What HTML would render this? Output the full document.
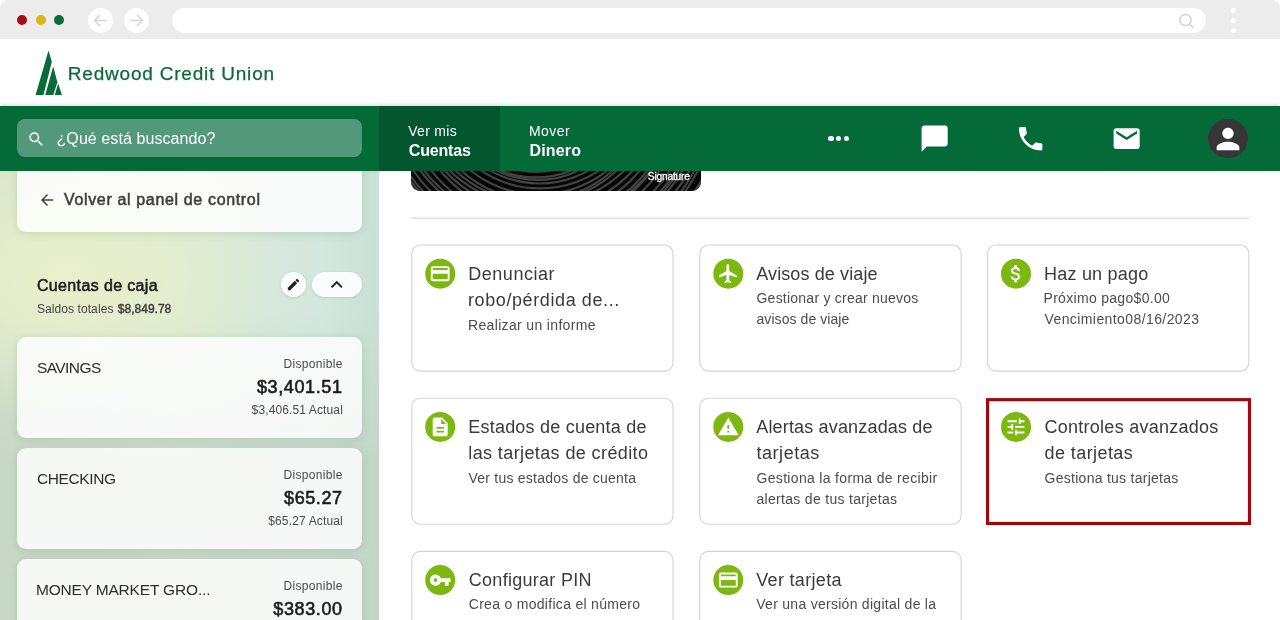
<!DOCTYPE html>
<html lang="es">
<head>
<meta charset="utf-8">
<title>Redwood Credit Union</title>
<style>
*{box-sizing:border-box;margin:0;padding:0}
html,body{width:1280px;height:620px;overflow:hidden;background:#fff}
body{position:relative;font-family:"Liberation Sans",sans-serif;color:#333}
.abs{position:absolute}
#txt{position:absolute;left:0;top:0;width:1280px;height:620px;z-index:10;will-change:transform}
.t{position:absolute;white-space:nowrap;line-height:1}
#chrome{left:0;top:0;width:1280px;height:39px;background:#ececec;border-radius:8px 8px 0 0}
.dot{position:absolute;width:10px;height:10px;border-radius:50%;top:15px}
.navb{position:absolute;width:25px;height:25px;border-radius:50%;background:#fff;top:8px}
#url{left:172px;top:8px;width:1034px;height:25px;border-radius:13px;background:#fff}
#hdr{left:0;top:39px;width:1280px;height:66px;background:#fff}
#nav{z-index:5;left:0;top:105.5px;width:1280px;height:65px;background:#046a38;box-shadow:0 -1px 4px rgba(0,0,0,.16)}
#tab{left:379px;top:0;width:121px;height:65px;background:#03562d}
#search{left:17px;top:13px;width:345px;height:38.500px;border-radius:8px;background:#52987a}
#side{left:0;top:170px;width:379px;height:450px;overflow:hidden;
 background:
 radial-gradient(ellipse 215px 145px at 65px 105px, rgba(234,240,202,1), rgba(234,240,202,0) 100%),
 linear-gradient(180deg, rgba(190,208,192,0) 140px, rgba(190,208,192,.62) 290px),
 linear-gradient(90deg,#d7e4cd 0%,#dcebd5 45%,#d2e7de 85%,#c9e0d5 100%);
}
.scard{position:absolute;left:17px;width:345px;border-radius:9px;background:rgba(255,255,255,.82);box-shadow:0 2px 8px rgba(60,90,70,.14)}
</style>
</head>
<body>
<div id="chrome" class="abs">
  <div class="dot" style="left:17px;background:#a80d14"></div>
  <div class="dot" style="left:35.500px;background:#e2b414"></div>
  <div class="dot" style="left:54px;background:#0c6b3a"></div>
  <div class="navb" style="left:88px"><svg width="25" height="25" viewBox="0 0 25 25"><path d="M19 12.500H6.500M12 7l-5.500 5.500L12 18" fill="none" stroke="#d8d8d8" stroke-width="1.600"/></svg></div>
  <div class="navb" style="left:124px"><svg width="25" height="25" viewBox="0 0 25 25"><path d="M6 12.500h12.500M13 7l5.500 5.500L13 18" fill="none" stroke="#d8d8d8" stroke-width="1.600"/></svg></div>
  <div id="url" class="abs"><svg class="abs" style="left:1003.800px;top:3px" width="20" height="20" viewBox="0 0 20 20"><circle cx="9.500" cy="9" r="5.600" fill="none" stroke="#d2d2d2" stroke-width="1.500"/><path d="M13.500 13l4 4" stroke="#d2d2d2" stroke-width="1.600"/></svg></div>
  <div class="abs" style="left:1231px;top:8px;width:5px;height:5px;border-radius:50%;background:#fff"></div>
  <div class="abs" style="left:1231px;top:18px;width:5px;height:5px;border-radius:50%;background:#fff"></div>
  <div class="abs" style="left:1231px;top:28px;width:5px;height:5px;border-radius:50%;background:#fff"></div>
</div>
<div id="hdr" class="abs">
  <svg class="abs" style="left:30px;top:8px" width="40" height="52" viewBox="30 47 40 52">
    <g fill="#0b6a39">
      <path d="M48.500 50.600 L51.800 61.800 L43.500 95 L35.600 95 Z"/>
      <path d="M53.200 66.500 L57.400 82.200 L53.300 95 L45.200 95 Z"/>
      <path d="M58.200 83.600 L61.900 95 L54.700 95 Z"/>
    </g>
  </svg>
</div>
<div id="nav" class="abs">
  <div id="tab" class="abs"></div>
  <div id="search" class="abs">
    <svg class="abs" style="left:10.200px;top:11.200px" width="18.500" height="18.500" viewBox="0 0 24 24"><path fill="#fff" d="M15.500 14h-.790l-.280-.270A6.471 6.471 0 0 0 16 9.500 6.500 6.500 0 1 0 9.500 16c1.610 0 3.090-.590 4.230-1.570l.270.280v.790l5 4.990L20.490 19l-4.990-5zm-6 0C7.010 14 5 11.990 5 9.500S7.010 5 9.500 5 14 7.010 14 9.500 11.990 14 9.500 14z"/></svg>
  </div>
  <div class="abs" style="left:828.4px;top:30.400px;width:5.200px;height:5.200px;border-radius:50%;background:#fff"></div>
  <div class="abs" style="left:836.3px;top:30.400px;width:5.200px;height:5.200px;border-radius:50%;background:#fff"></div>
  <div class="abs" style="left:844.2px;top:30.400px;width:5.200px;height:5.200px;border-radius:50%;background:#fff"></div>
  <svg class="abs" style="left:919.3px;top:17.200px" width="31.3" height="31.3" viewBox="0 0 24 24"><path fill="#fff" d="M20 2H4c-1.100 0-2 .900-2 2v18l4-4h14c1.100 0 2-.900 2-2V4c0-1.100-.900-2-2-2z"/></svg>
  <svg class="abs" style="left:1015.4px;top:17.600px" width="31.3" height="31.3" viewBox="0 0 24 24"><path fill="#fff" d="M6.620 10.790c1.440 2.830 3.760 5.140 6.590 6.590l2.200-2.200c.270-.270.670-.360 1.020-.240 1.120.370 2.330.570 3.570.570.550 0 1 .450 1 1V20c0 .550-.450 1-1 1-9.390 0-17-7.610-17-17 0-.550.450-1 1-1h3.500c.550 0 1 .450 1 1 0 1.250.200 2.450.570 3.570.110.350.030.740-.250 1.020l-2.200 2.200z"/></svg>
  <svg class="abs" style="left:1111.45px;top:17.900px" width="31.3" height="31.3" viewBox="0 0 24 24"><path fill="#fff" d="M20 4H4c-1.100 0-1.990.900-1.990 2L2 18c0 1.100.900 2 2 2h16c1.100 0 2-.900 2-2V6c0-1.100-.900-2-2-2zm0 4l-8 5-8-5V6l8 5 8-5v2z"/></svg>
  <div class="abs" style="left:1208.4px;top:13.200px;width:39.600px;height:39.600px;border-radius:50%;background:#363636"></div>
  <svg class="abs" style="left:1211.2px;top:16.400px" width="34" height="34" viewBox="0 0 24 24"><path fill="#fff" d="M12 12c2.210 0 4-1.790 4-4s-1.790-4-4-4-4 1.790-4 4 1.790 4 4 4zm0 2c-2.670 0-8 1.340-8 4v2h16v-2c0-2.660-5.330-4-8-4z"/></svg>
</div>
<div id="side" class="abs">
  <div class="scard" style="top:-10px;height:71.500px">
    <svg class="abs" style="left:21px;top:31px" width="18" height="18" viewBox="0 0 24 24"><path fill="#444" d="M20 11H7.830l5.590-5.590L12 4l-8 8 8 8 1.410-1.410L7.830 13H20v-2z"/></svg>
  </div>
  <div class="abs" style="left:281px;top:102px;width:25px;height:25px;border-radius:50%;background:rgba(255,255,255,.9);box-shadow:0 1px 3px rgba(60,90,70,.15)">
    <svg class="abs" style="left:5px;top:5px" width="15" height="15" viewBox="0 0 24 24"><path fill="#222" d="M3 17.250V21h3.750L17.810 9.940l-3.750-3.750L3 17.250zM20.710 7.040a.996.996 0 0 0 0-1.410l-2.340-2.340a.996.996 0 0 0-1.410 0l-1.830 1.830 3.750 3.750 1.830-1.830z"/></svg>
  </div>
  <div class="abs" style="left:312px;top:102px;width:49.800px;height:25px;border-radius:13px;background:rgba(255,255,255,.9);box-shadow:0 1px 3px rgba(60,90,70,.15)">
    <svg class="abs" style="left:13.200px;top:0.800px" width="23.500" height="23.500" viewBox="0 0 24 24"><path fill="#222" d="M7.410 15.410L12 10.830l4.590 4.580L18 14l-6-6-6 6z"/></svg>
  </div>
  <div class="scard" style="top:167px;height:101px"></div>
  <div class="scard" style="top:278px;height:101px"></div>
  <div class="scard" style="top:389px;height:101px"></div>
</div>
<div id="main" class="abs" style="left:0;top:0">
<div class="abs" id="bcard" style="left:411px;top:150px;width:290px;height:41px;border-radius:9px;background:#060606;overflow:hidden">
<svg class="abs" style="left:0;top:0" width="290" height="41" viewBox="0 0 290 41"><g fill="none" stroke="#444" stroke-width="2.100"><ellipse cx="127.0" cy="-53.5" rx="61.5" ry="58.0"/><ellipse cx="128.7" cy="-54.6" rx="67.0" ry="62.5"/><ellipse cx="128.8" cy="-56.3" rx="71.4" ry="67.5"/><ellipse cx="127.3" cy="-56.1" rx="74.8" ry="71.3"/><ellipse cx="125.5" cy="-54.3" rx="81.3" ry="76.2"/><ellipse cx="125.1" cy="-53.5" rx="86.6" ry="80.9"/><ellipse cx="126.4" cy="-54.9" rx="89.1" ry="84.8"/><ellipse cx="128.3" cy="-56.4" rx="94.6" ry="89.9"/><ellipse cx="129.0" cy="-55.8" rx="100.8" ry="94.2"/><ellipse cx="127.8" cy="-54.0" rx="104.8" ry="98.4"/><ellipse cx="125.9" cy="-53.6" rx="108.5" ry="103.5"/><ellipse cx="125.0" cy="-55.2" rx="113.7" ry="107.4"/><ellipse cx="125.9" cy="-56.5" rx="120.2" ry="112.1"/><ellipse cx="127.8" cy="-55.6" rx="123.9" ry="117.0"/><ellipse cx="129.0" cy="-53.8" rx="126.6" ry="120.8"/><ellipse cx="128.3" cy="-53.8" rx="133.9" ry="125.8"/><ellipse cx="126.4" cy="-55.6" rx="139.6" ry="130.3"/><ellipse cx="125.1" cy="-56.5" rx="141.3" ry="134.3"/><ellipse cx="125.5" cy="-55.2" rx="146.6" ry="139.5"/><ellipse cx="127.3" cy="-53.6" rx="153.6" ry="143.6"/><ellipse cx="128.8" cy="-54.0" rx="157.8" ry="147.9"/><ellipse cx="128.7" cy="-55.8" rx="160.5" ry="153.0"/><ellipse cx="127.0" cy="-56.4" rx="165.7" ry="156.9"/><ellipse cx="125.3" cy="-54.9" rx="173.3" ry="161.6"/><ellipse cx="125.2" cy="-53.5" rx="176.5" ry="166.5"/><ellipse cx="126.7" cy="-54.3" rx="178.3" ry="170.3"/><ellipse cx="128.5" cy="-56.1" rx="186.4" ry="175.4"/><ellipse cx="128.9" cy="-56.3" rx="192.7" ry="179.8"/><ellipse cx="127.5" cy="-54.6" rx="193.8" ry="183.8"/><ellipse cx="125.7" cy="-53.5" rx="198.4" ry="189.0"/></g></svg>
</div>
<svg class="abs" style="left:0;top:0" width="1280" height="620" viewBox="0 0 1280 620">
<rect x="411.80" y="245.00" width="261.2" height="126.1" rx="8.5" fill="#fff" stroke="#d3d3d3" stroke-width="1.1"/>
<circle cx="440.20" cy="273.70" r="15" fill="#7cb80f"/><svg x="428.95" y="262.45" width="22.5" height="22.5" viewBox="0 0 24 24"><path fill="#fff" d="M20 4H4c-1.110 0-1.990.890-1.990 2L2 18c0 1.110.890 2 2 2h16c1.110 0 2-.890 2-2V6c0-1.110-.890-2-2-2zm0 14H4v-6h16v6zm0-10H4V6h16v2z"/></svg>
<rect x="699.90" y="245.00" width="261.2" height="126.1" rx="8.5" fill="#fff" stroke="#d3d3d3" stroke-width="1.1"/>
<circle cx="728.30" cy="273.70" r="15" fill="#7cb80f"/><svg x="717.05" y="262.45" width="22.5" height="22.5" viewBox="0 0 24 24"><path fill="#fff" d="M21 16v-2l-8-5V3.500c0-.830-.670-1.500-1.500-1.500S10 2.670 10 3.500V9l-8 5v2l8-2.500V19l-2 1.500V22l3.500-1 3.500 1v-1.500L13 19v-5.500l8 2.500z"/></svg>
<rect x="987.60" y="245.00" width="261.2" height="126.1" rx="8.5" fill="#fff" stroke="#d3d3d3" stroke-width="1.1"/>
<circle cx="1016.00" cy="273.70" r="15" fill="#7cb80f"/><svg x="1004.75" y="262.45" width="22.5" height="22.5" viewBox="0 0 24 24"><path fill="#fff" d="M11.800 10.900c-2.270-.590-3-1.200-3-2.150 0-1.090 1.010-1.850 2.700-1.850 1.780 0 2.440.850 2.500 2.100h2.210c-.070-1.720-1.120-3.300-3.210-3.810V3h-3v2.160c-1.940.420-3.500 1.680-3.500 3.610 0 2.310 1.910 3.460 4.700 4.130 2.500.600 3 1.480 3 2.410 0 .690-.490 1.790-2.700 1.790-2.060 0-2.870-.920-2.980-2.100h-2.200c.120 2.190 1.760 3.420 3.680 3.830V21h3v-2.150c1.950-.370 3.500-1.500 3.500-3.550 0-2.840-2.430-3.810-4.700-4.400z"/></svg>
<rect x="411.80" y="398.20" width="261.2" height="126.1" rx="8.5" fill="#fff" stroke="#d3d3d3" stroke-width="1.1"/>
<circle cx="440.20" cy="426.90" r="15" fill="#7cb80f"/><svg x="428.95" y="415.65" width="22.5" height="22.5" viewBox="0 0 24 24"><path fill="#fff" d="M14 2H6c-1.100 0-1.990.900-1.990 2L4 20c0 1.100.890 2 1.990 2H18c1.100 0 2-.900 2-2V8l-6-6zm2 16H8v-2h8v2zm0-4H8v-2h8v2zm-3-5V3.500L18.500 9H13z"/></svg>
<rect x="699.90" y="398.20" width="261.2" height="126.1" rx="8.5" fill="#fff" stroke="#d3d3d3" stroke-width="1.1"/>
<circle cx="728.30" cy="426.90" r="15" fill="#7cb80f"/><svg x="717.05" y="415.65" width="22.5" height="22.5" viewBox="0 0 24 24"><path fill="#fff" d="M1 21h22L12 2 1 21zm12-3h-2v-2h2v2zm0-4h-2v-4h2v4z"/></svg>
<circle cx="1016.00" cy="426.90" r="15" fill="#7cb80f"/><svg x="1004.75" y="415.65" width="22.5" height="22.5" viewBox="0 0 24 24"><path fill="#fff" d="M3 17v2h6v-2H3zM3 5v2h10V5H3zm10 16v-2h8v-2h-8v-2h-2v6h2zM7 9v2H3v2h4v2h2V9H7zm14 4v-2H11v2h10zm-6-4h2V7h4V5h-4V3h-2v6z"/></svg>
<rect x="411.80" y="551.40" width="261.2" height="126.1" rx="8.5" fill="#fff" stroke="#d3d3d3" stroke-width="1.1"/>
<circle cx="440.20" cy="580.10" r="15" fill="#7cb80f"/><svg x="428.95" y="568.85" width="22.5" height="22.5" viewBox="0 0 24 24"><path fill="#fff" d="M12.650 10C11.830 7.670 9.610 6 7 6c-3.310 0-6 2.690-6 6s2.690 6 6 6c2.610 0 4.830-1.670 5.650-4H17v4h4v-4h2v-4H12.650zM7 14c-1.100 0-2-.900-2-2s.900-2 2-2 2 .900 2 2-.900 2-2 2z"/></svg>
<rect x="699.90" y="551.40" width="261.2" height="126.1" rx="8.5" fill="#fff" stroke="#d3d3d3" stroke-width="1.1"/>
<circle cx="728.30" cy="580.10" r="15" fill="#7cb80f"/><svg x="717.05" y="568.85" width="22.5" height="22.5" viewBox="0 0 24 24"><path fill="#fff" d="M20 4H4c-1.110 0-1.990.890-1.990 2L2 18c0 1.110.890 2 2 2h16c1.110 0 2-.890 2-2V6c0-1.110-.890-2-2-2zm0 14H4v-6h16v6zm0-10H4V6h16v2z"/></svg>
<path d="M411.3 218.1H1249" stroke="#dadada" stroke-width="1.1" fill="none"/>
<rect x="987.55" y="399.65" width="261.9" height="123.8" fill="none" stroke="#a30509" stroke-width="3.1"/>
</svg>

</div>
<div id="txt">
<div class="t" style="left:67.75px;top:64.22px;font-size:19px;color:#0b6a39;letter-spacing:0.798px;-webkit-text-stroke:0.25px #0b6a39">Redwood Credit Union</div>
<div class="t" style="left:56.50px;top:130.96px;font-size:16px;color:#fff;letter-spacing:0.081px">¿Qué está buscando?</div>
<div class="t" style="left:408.25px;top:123.65px;font-size:14px;color:#fff;letter-spacing:0.304px">Ver mis</div>
<div class="t" style="left:408.75px;top:142.96px;font-size:16px;color:#fff;letter-spacing:-0.163px;font-weight:bold">Cuentas</div>
<div class="t" style="left:529.00px;top:123.65px;font-size:14px;color:#fff;letter-spacing:0.441px">Mover</div>
<div class="t" style="left:529.50px;top:142.96px;font-size:16px;color:#fff;letter-spacing:0.170px;font-weight:bold">Dinero</div>
<div class="t" style="left:64.00px;top:192.06px;font-size:16px;color:#3e3e3e;letter-spacing:0.651px;-webkit-text-stroke:0.54px #3e3e3e">Volver al panel de control</div>
<div class="t" style="left:36.90px;top:277.56px;font-size:16px;color:#1e1e1e;letter-spacing:0.369px;-webkit-text-stroke:0.54px #1e1e1e">Cuentas de caja</div>
<div class="t" style="left:36.90px;top:302.84px;font-size:12px;color:#444;letter-spacing:0.086px">Saldos totales</div>
<div class="t" style="left:117.80px;top:302.84px;font-size:12px;color:#3c3c3c;letter-spacing:0.011px;-webkit-text-stroke:0.41px #3c3c3c">$8,849.78</div>
<div class="t" style="left:36.90px;top:359.88px;font-size:15.5px;color:#2c2c2c;letter-spacing:-0.554px">SAVINGS</div>
<div class="t" style="left:283.40px;top:358.24px;font-size:12px;color:#4a4a4a;letter-spacing:0.338px">Disponible</div>
<div class="t" style="left:256.90px;top:378.16px;font-size:18px;color:#1c1c1c;letter-spacing:0.629px;-webkit-text-stroke:0.61px #1c1c1c">$3,401.51</div>
<div class="t" style="left:251.60px;top:403.59px;font-size:12px;color:#4a4a4a;letter-spacing:0.120px">$3,406.51 Actual</div>
<div class="t" style="left:36.90px;top:470.88px;font-size:15.5px;color:#2c2c2c;letter-spacing:-0.380px">CHECKING</div>
<div class="t" style="left:283.40px;top:469.24px;font-size:12px;color:#4a4a4a;letter-spacing:0.338px">Disponible</div>
<div class="t" style="left:284.10px;top:489.16px;font-size:18px;color:#1c1c1c;letter-spacing:0.571px;-webkit-text-stroke:0.61px #1c1c1c">$65.27</div>
<div class="t" style="left:268.20px;top:514.59px;font-size:12px;color:#4a4a4a;letter-spacing:0.156px">$65.27 Actual</div>
<div class="t" style="left:35.90px;top:581.88px;font-size:15.5px;color:#2c2c2c;letter-spacing:-0.175px">MONEY MARKET GRO...</div>
<div class="t" style="left:283.40px;top:580.24px;font-size:12px;color:#4a4a4a;letter-spacing:0.338px">Disponible</div>
<div class="t" style="left:273.30px;top:600.16px;font-size:18px;color:#1c1c1c;letter-spacing:0.608px;-webkit-text-stroke:0.61px #1c1c1c">$383.00</div>
<div class="t" style="left:647.80px;top:172.27px;font-size:10.2px;color:#f4f4f4;letter-spacing:-0.181px;-webkit-text-stroke:0.35px #f4f4f4">Signature</div>
<div class="t" style="left:468.25px;top:264.51px;font-size:18px;color:#3a3a3a;letter-spacing:0.525px">Denunciar</div>
<div class="t" style="left:468.00px;top:291.01px;font-size:18px;color:#3a3a3a;letter-spacing:0.597px">robo/pérdida de...</div>
<div class="t" style="left:468.00px;top:317.85px;font-size:14px;color:#4c4c4c;letter-spacing:0.342px">Realizar un informe</div>
<div class="t" style="left:756.25px;top:264.51px;font-size:18px;color:#3a3a3a;letter-spacing:0.109px">Avisos de viaje</div>
<div class="t" style="left:756.50px;top:290.95px;font-size:14px;color:#4c4c4c;letter-spacing:0.232px">Gestionar y crear nuevos</div>
<div class="t" style="left:756.50px;top:312.45px;font-size:14px;color:#4c4c4c;letter-spacing:0.068px">avisos de viaje</div>
<div class="t" style="left:1044.00px;top:264.51px;font-size:18px;color:#3a3a3a;letter-spacing:0.218px">Haz un pago</div>
<div class="t" style="left:1043.50px;top:290.95px;font-size:14px;color:#4c4c4c;letter-spacing:0.305px">Próximo pago$0.00</div>
<div class="t" style="left:1044.50px;top:312.45px;font-size:14px;color:#4c4c4c;letter-spacing:0.410px">Vencimiento08/16/2023</div>
<div class="t" style="left:468.25px;top:417.71px;font-size:18px;color:#3a3a3a;letter-spacing:0.217px">Estados de cuenta de</div>
<div class="t" style="left:468.25px;top:444.21px;font-size:18px;color:#3a3a3a;letter-spacing:0.394px">las tarjetas de crédito</div>
<div class="t" style="left:468.50px;top:471.05px;font-size:14px;color:#4c4c4c;letter-spacing:0.235px">Ver tus estados de cuenta</div>
<div class="t" style="left:756.25px;top:417.71px;font-size:18px;color:#3a3a3a;letter-spacing:0.166px">Alertas avanzadas de</div>
<div class="t" style="left:756.50px;top:444.21px;font-size:18px;color:#3a3a3a;letter-spacing:0.532px">tarjetas</div>
<div class="t" style="left:756.50px;top:471.05px;font-size:14px;color:#4c4c4c;letter-spacing:0.322px">Gestiona la forma de recibir</div>
<div class="t" style="left:756.50px;top:492.35px;font-size:14px;color:#4c4c4c;letter-spacing:0.302px">alertas de tus tarjetas</div>
<div class="t" style="left:1044.60px;top:417.71px;font-size:18px;color:#3a3a3a;letter-spacing:0.250px">Controles avanzados</div>
<div class="t" style="left:1044.60px;top:444.21px;font-size:18px;color:#3a3a3a;letter-spacing:0.410px">de tarjetas</div>
<div class="t" style="left:1044.60px;top:471.05px;font-size:14px;color:#4c4c4c;letter-spacing:0.265px">Gestiona tus tarjetas</div>
<div class="t" style="left:468.75px;top:570.91px;font-size:18px;color:#3a3a3a;letter-spacing:0.285px">Configurar PIN</div>
<div class="t" style="left:468.75px;top:597.35px;font-size:14px;color:#4c4c4c;letter-spacing:0.296px">Crea o modifica el número</div>
<div class="t" style="left:756.25px;top:570.91px;font-size:18px;color:#3a3a3a;letter-spacing:0.321px">Ver tarjeta</div>
<div class="t" style="left:756.25px;top:597.35px;font-size:14px;color:#4c4c4c;letter-spacing:0.278px">Ver una versión digital de la</div>
</div>
</body>
</html>
